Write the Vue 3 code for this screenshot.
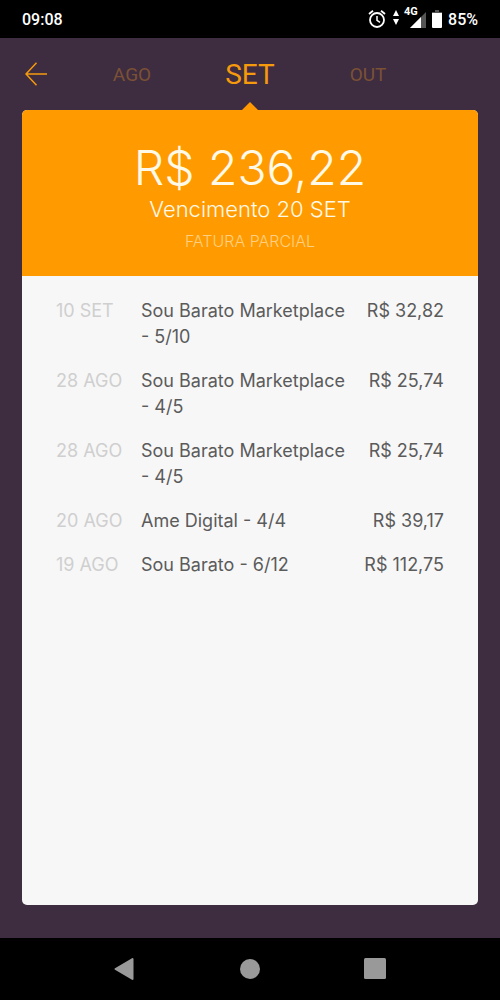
<script setup>
import { ref } from 'vue'

const months = ['AGO', 'SET', 'OUT']
const current = ref('SET')

const entries = [
  { date: '10 SET', name: 'Sou Barato Marketplace - 5/10', value: 'R$ 32,82' },
  { date: '28 AGO', name: 'Sou Barato Marketplace - 4/5', value: 'R$ 25,74' },
  { date: '28 AGO', name: 'Sou Barato Marketplace - 4/5', value: 'R$ 25,74' },
  { date: '20 AGO', name: 'Ame Digital - 4/4', value: 'R$ 39,17' },
  { date: '19 AGO', name: 'Sou Barato - 6/12', value: 'R$ 112,75' },
]
</script>

<template>
  <div class="screen">
    <header class="status">
      <span class="clock">09:08</span>
      <svg class="alarm" width="18" height="20" viewBox="0 0 18 20" fill="none" stroke="#fff" aria-hidden="true">
        <circle cx="9" cy="11" r="7" stroke-width="1.800" />
        <path d="M9 7v4.300l3 2" stroke-width="1.500" />
        <path d="M1 5l4-3.300M17 5l-4-3.300" stroke-width="1.800" />
      </svg>
      <svg class="data" width="6" height="16" viewBox="0 0 6 16" fill="#fff" aria-hidden="true">
        <path d="M3 0l3 6H0zM3 15l3-6H0z" />
      </svg>
      <span class="network">
        <svg width="16" height="16" viewBox="0 0 16 16" aria-hidden="true">
          <path d="M16 0v16H0z" fill="#555" />
          <path d="M11 5v11H0z" fill="#fff" />
        </svg>
        <span class="network-type">4G</span>
      </span>
      <svg class="battery" width="10" height="18" viewBox="0 0 10 18" aria-hidden="true">
        <path d="M3 0h4v2h3v2H0V2h3z" fill="#555" />
        <path d="M0 3h10v14a1 1 0 0 1-1 1H1a1 1 0 0 1-1-1z" fill="#fff" />
      </svg>
      <span class="percent">85%</span>
    </header>

    <nav class="months" aria-label="Meses">
      <button class="back" type="button" aria-label="Voltar">
        <svg width="22" height="24" viewBox="0 0 22 24" fill="none" stroke="#f59a0c" stroke-width="1.500" aria-hidden="true">
          <path d="M22 12H1M11.500 .8L1 12l10.500 11.200" />
        </svg>
      </button>
      <button
        v-for="month in months"
        :key="month"
        class="month"
        :class="{ active: month === current }"
        type="button"
        @click="current = month"
      >{{ month }}</button>
    </nav>

    <main class="card">
      <section class="summary">
        <h1 class="total">R$ 236,22</h1>
        <p class="due">Vencimento 20 SET</p>
        <p class="state">FATURA PARCIAL</p>
      </section>
      <table class="entries">
        <tbody>
          <tr v-for="(entry, i) in entries" :key="i">
            <td class="date">{{ entry.date }}</td>
            <td class="name">{{ entry.name }}</td>
            <td class="value">{{ entry.value }}</td>
          </tr>
        </tbody>
      </table>
    </main>

    <footer class="system">
      <button type="button" aria-label="Voltar no sistema">
        <svg width="22" height="24" viewBox="0 0 22 24" aria-hidden="true">
          <path d="M1.500 12L18.500 2v20z" fill="#999" stroke="#999" stroke-width="2" stroke-linejoin="round" />
        </svg>
      </button>
      <button type="button" aria-label="Início">
        <svg width="22" height="24" viewBox="0 0 22 24" aria-hidden="true"><circle cx="11" cy="12" r="10" fill="#999" /></svg>
      </button>
      <button type="button" aria-label="Recentes">
        <svg width="22" height="24" viewBox="0 0 22 24" aria-hidden="true"><rect y="1" width="22" height="21" rx="1.500" fill="#999" /></svg>
      </button>
    </footer>
  </div>
</template>

<style>
body {
  background: #3e2c40;
}
</style>

<style scoped>
.screen {
  display: flex;
  flex-direction: column;
  min-height: 100vh;
  background: #3e2c40;
  font-family: Inter, "Noto Sans", sans-serif;
}

button {
  padding: 0;
  border: 0;
  background: none;
  cursor: pointer;
}

svg {
  display: block;
}

.status {
  display: flex;
  align-items: center;
  box-sizing: border-box;
  height: 38px;
  padding: 2px 22px 0;
  background: #000;
  color: #fff;
  font: 500 16px/36px Roboto, sans-serif;
}

.clock {
  margin-right: auto;
}

.alarm,
.battery {
  margin-bottom: 2px;
}

.data {
  margin: 0 0 4px 7px;
}

.network {
  position: relative;
  margin: 0 6px 0 11px;
}

.network-type {
  position: absolute;
  top: -6px;
  left: -6px;
  font-size: 11px;
  font-weight: 700;
  line-height: 12px;
}

.percent {
  margin-left: 6px;
}

.months {
  display: grid;
  grid-template-columns: 1fr 118px 118px 118px 1fr;
  align-items: center;
  height: 72px;
}

.back {
  padding-left: 25px;
}

.month {
  padding-top: 2px;
  color: #7b5135;
  font: 400 19px/32px Roboto, sans-serif;
}

.month.active {
  color: #f59a0c;
  font-size: 28px;
}

.card {
  flex: 1;
  margin: 0 22px 33px;
  border-radius: 5px;
  background: #f7f7f7;
}

.summary {
  position: relative;
  padding: 31px 0 25px;
  border-radius: 5px 5px 0 0;
  background: #ff9b00;
  color: #fff9e8;
  text-align: center;
}

.summary::before {
  content: "";
  position: absolute;
  top: -8px;
  left: calc(50% - 8px);
  border: 8px solid transparent;
  border-top: 0;
  border-bottom-color: #ff9b00;
}

.total {
  margin: 0;
  font-size: 48px;
  font-weight: 300;
  line-height: 54px;
}

.due {
  margin: 0;
  font-size: 22px;
  font-weight: 300;
  line-height: 28px;
}

.state {
  margin: 8px 0 0;
  color: #ffd083;
  font-size: 16px;
  font-weight: 300;
  line-height: 20px;
}

.entries {
  width: 100%;
  padding: 22px 34px 0;
  border-spacing: 0;
  table-layout: fixed;
  color: #5b5b5b;
  font-size: 18px;
  line-height: 26px;
}

.entries td {
  padding: 0 0 18px;
  vertical-align: top;
}

.entries .date {
  width: 85px;
  color: #cfcfcf;
}

.entries .value {
  width: 90px;
  text-align: right;
  white-space: nowrap;
}

.system {
  display: flex;
  justify-content: center;
  gap: 103px;
  height: 62px;
  background: #000;
}
</style>
